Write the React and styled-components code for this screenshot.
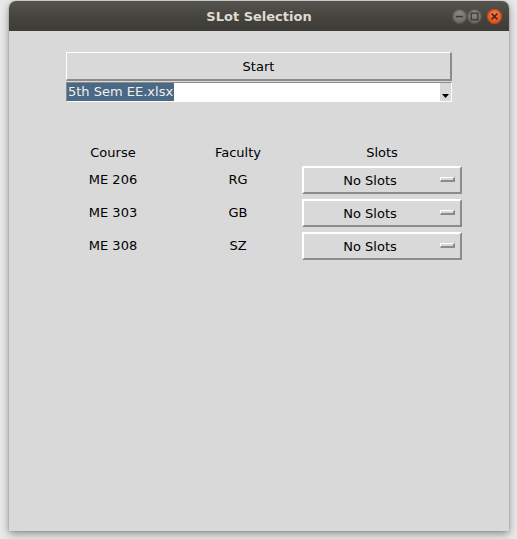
import React from "react";
import styled, { createGlobalStyle } from "styled-components";

const Global = createGlobalStyle`
  html, body { margin: 0; padding: 0; }
  body {
    background: #e9e9e9;
    width: 517px;
    height: 539px;
    overflow: hidden;
    font-family: "DejaVu Sans", "Liberation Sans", sans-serif;
  }
`;

const Page = styled.div`
  padding: 1px 8px 0 9px;
`;

const Window = styled.div`
  width: 500px;
  height: 530px;
  display: flex;
  flex-direction: column;
  border-radius: 7px 7px 0 0;
  overflow: hidden;
  background: #d9d9d9;
  box-shadow: 0 3px 9px rgba(0, 0, 0, 0.38), 0 0 2px rgba(0, 0, 0, 0.25);
`;

const TitleBar = styled.div`
  height: 30px;
  flex: none;
  position: relative;
  display: flex;
  align-items: center;
  justify-content: center;
  background: linear-gradient(#56544e, #44423d 60%, #3d3c38);
  color: #dfdbd2;
  font-family: "DejaVu Sans", sans-serif;
  font-weight: bold;
  font-size: 13px;
`;

const Controls = styled.div`
  position: absolute;
  right: 7px;
  top: 8px;
  display: flex;
`;

const CtrlBtn = styled.div`
  width: 15px;
  height: 15px;
  border-radius: 50%;
  margin-left: ${(p) => (p.$close ? "5px" : "0")};
  display: flex;
  align-items: center;
  justify-content: center;
  background: ${(p) =>
    p.$close
      ? "radial-gradient(circle at 50% 30%, #f47a45, #e6561f 65%, #cf4a1b)"
      : "radial-gradient(circle at 50% 30%, #8a8782, #706e69 65%, #5f5e59)"};
  box-shadow: inset 0 0 0 1px ${(p) => (p.$close ? "#b9451c" : "#4f4e4a")};
`;

const Body = styled.div`
  flex: 1;
  display: flex;
  flex-direction: column;
  padding: 21px 0 0 57px;
  font-size: 13px;
  color: #000;
`;

const StartButton = styled.div`
  width: 386px;
  height: 29px;
  box-sizing: border-box;
  display: flex;
  align-items: center;
  justify-content: center;
  border-style: solid;
  border-width: 1px 2px 2px 1px;
  border-color: #ffffff #8b8b8b #8b8b8b #ffffff;
  background: #d9d9d9;
`;

const Combo = styled.div`
  margin-top: 1px;
  width: 386px;
  height: 20px;
  box-sizing: border-box;
  display: flex;
  border-style: solid;
  border-width: 1px;
  border-color: #8b8b8b #ffffff #ffffff #8b8b8b;
  background: #ffffff;
`;

const ComboText = styled.div`
  flex: 1;
  display: flex;
  align-items: center;
`;

const Selected = styled.span`
  background: #4a6984;
  color: #f0f0f0;
  line-height: 18px;
  padding: 0 1px;
`;

const ComboArrow = styled.div`
  width: 12px;
  background: #d9d9d9;
  border-left: 1px solid #ffffff;
  display: flex;
  align-items: flex-end;
  justify-content: center;
  padding-bottom: 3px;
  box-sizing: border-box;
`;

const Table = styled.div`
  margin-top: 43px;
  display: grid;
  grid-template-columns: [course] 94px 31px [faculty] 94px 17px [slots] 160px;
  grid-template-rows: 16px;
  grid-auto-rows: 28px;
  row-gap: 5px;
  align-items: center;
`;

const Cell = styled.div`
  grid-column: ${(p) => p.$col};
  text-align: center;
  line-height: 16px;
`;

const MenuButton = styled.div`
  grid-column: slots;
  height: 28px;
  box-sizing: border-box;
  display: flex;
  align-items: center;
  border-style: solid;
  border-width: 2px;
  border-color: #ffffff #8b8b8b #8b8b8b #ffffff;
  background: #d9d9d9;
  padding-right: 5px;
`;

const MenuLabel = styled.span`
  flex: 1;
  text-align: center;
  padding-right: 4px;
`;

const Indicator = styled.span`
  width: 15px;
  height: 5px;
  box-sizing: border-box;
  border-style: solid;
  border-width: 1px 2px 2px 1px;
  border-color: #ffffff #8b8b8b #8b8b8b #ffffff;
  background: #d9d9d9;
  margin-top: -1px;
`;

const rows = [
  ["ME 206", "RG"],
  ["ME 303", "GB"],
  ["ME 308", "SZ"],
];

export default function App() {
  return (
    <>
      <Global />
      <Page>
        <Window>
          <TitleBar>
            SLot Selection
            <Controls>
              <CtrlBtn>
                <svg width="9" height="9" viewBox="0 0 9 9">
                  <rect x="1" y="3.8" width="7" height="1.5" fill="#3a3934" />
                </svg>
              </CtrlBtn>
              <CtrlBtn>
                <svg width="9" height="9" viewBox="0 0 9 9">
                  <rect x="1.2" y="1.2" width="6.6" height="6.6" fill="none" stroke="#3a3934" strokeWidth="1.3" />
                </svg>
              </CtrlBtn>
              <CtrlBtn $close>
                <svg width="9" height="9" viewBox="0 0 9 9">
                  <path d="M1.6 1.6 L7.4 7.4 M7.4 1.6 L1.6 7.4" stroke="#3b2a22" strokeWidth="1.5" />
                </svg>
              </CtrlBtn>
            </Controls>
          </TitleBar>
          <Body>
            <StartButton>Start</StartButton>
            <Combo>
              <ComboText>
                <Selected>5th Sem EE.xlsx</Selected>
              </ComboText>
              <ComboArrow>
                <svg width="7" height="4" viewBox="0 0 7 4">
                  <polygon points="0,0 7,0 3.5,4" fill="#000" />
                </svg>
              </ComboArrow>
            </Combo>
            <Table>
              <Cell $col="course">Course</Cell>
              <Cell $col="faculty">Faculty</Cell>
              <Cell $col="slots">Slots</Cell>
              {rows.map(([c, f]) => (
                <React.Fragment key={c}>
                  <Cell $col="course">{c}</Cell>
                  <Cell $col="faculty">{f}</Cell>
                  <MenuButton>
                    <MenuLabel>No Slots</MenuLabel>
                    <Indicator />
                  </MenuButton>
                </React.Fragment>
              ))}
            </Table>
          </Body>
        </Window>
      </Page>
    </>
  );
}
